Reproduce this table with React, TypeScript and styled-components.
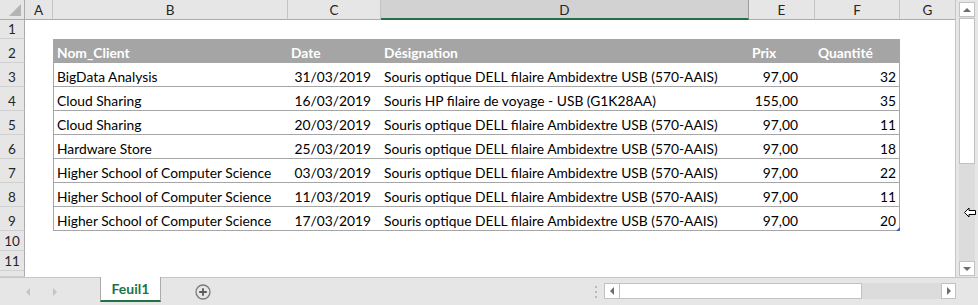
import React from "react";
import styled, { createGlobalStyle } from "styled-components";

const Global = createGlobalStyle`
  html, body { margin: 0; padding: 0; background: #ffffff; overflow: hidden; }
  body { width: 978px; height: 305px; font-family: Lato, "Open Sans", sans-serif; }
  * { box-sizing: border-box; }
`;

const FONT = `Lato, "Open Sans", sans-serif`;
const COLS = [28, 235, 93, 368, 66, 85, 56];
const GRID = `25px ${COLS.map((c) => c + "px").join(" ")}`;
const LETTERS = ["A", "B", "C", "D", "E", "F", "G"];

type Row = [string, string, string, string, string];
const DELL = "Souris optique DELL filaire Ambidextre USB (570-AAIS)";
const ROWS: Row[] = [
  ["BigData Analysis", "31/03/2019", DELL, "97,00", "32"],
  ["Cloud Sharing", "16/03/2019", "Souris HP filaire de voyage - USB (G1K28AA)", "155,00", "35"],
  ["Cloud Sharing", "20/03/2019", DELL, "97,00", "11"],
  ["Hardware Store", "25/03/2019", DELL, "97,00", "18"],
  ["Higher School of Computer Science", "03/03/2019", DELL, "97,00", "22"],
  ["Higher School of Computer Science", "11/03/2019", DELL, "97,00", "11"],
  ["Higher School of Computer Science", "17/03/2019", DELL, "97,00", "20"],
];
const HEAD = ["Nom_Client", "Date", "Désignation", "Prix", "Quantité"];
const ALIGN: ("left" | "right")[] = ["left", "right", "left", "right", "right"];
const PAD_R = [4, 10, 4, 17, 3];

const Window = styled.div`
  width: 978px;
  height: 305px;
  display: flex;
  flex-direction: column;
  font-family: ${FONT};
  background: #e6e6e6;
`;

const Main = styled.div`
  display: flex;
  height: 277px;
`;

const Sheet = styled.div`
  width: 956px;
  height: 277px;
  background: #ffffff;
  border-right: 1px solid #c6c6c6;
  display: flex;
  flex-direction: column;
  overflow: hidden;
`;

const SheetRow = styled.div<{ $h: number }>`
  display: grid;
  grid-template-columns: ${GRID};
  height: ${(p) => p.$h}px;
  flex: none;
`;

const Corner = styled.div`
  position: relative;
  background: #e6e6e6;
  border-right: 1px solid #ababab;
  border-bottom: 1px solid #ababab;
  &::after {
    content: "";
    position: absolute;
    right: 3px;
    bottom: 3px;
    width: 0;
    height: 0;
    border-left: 12px solid transparent;
    border-bottom: 12px solid #b4b4b4;
  }
`;

const ColHead = styled.div<{ $sel?: boolean }>`
  background: ${(p) => (p.$sel ? "#d2d2d2" : "#e6e6e6")};
  border-right: 1px solid ${(p) => (p.$sel ? "#9e9e9e" : "#c3c3c3")};
  border-bottom: ${(p) => (p.$sel ? "2px solid #217346" : "1px solid #ababab")};
  display: flex;
  align-items: center;
  justify-content: center;
  font-size: 13.5px;
  color: #262626;
  padding-top: ${(p) => (p.$sel ? 1 : 0)}px;
`;

const RowHead = styled.div`
  background: #e6e6e6;
  border-right: 1px solid #ababab;
  border-bottom: 1px solid #d0d0d0;
  display: flex;
  align-items: flex-end;
  justify-content: center;
  font-size: 13.5px;
  line-height: 16px;
  color: #262626;
  padding-bottom: 1px;
`;

const Empty = styled.div``;

const TCell = styled.div<{
  $head?: boolean;
  $align: "left" | "right";
  $pr: number;
  $first?: boolean;
  $last?: boolean;
}>`
  position: relative;
  display: flex;
  align-items: flex-end;
  justify-content: ${(p) => (p.$align === "right" ? "flex-end" : "flex-start")};
  padding: 0 ${(p) => p.$pr}px 0 3px;
  background: ${(p) => (p.$head ? "#a5a5a5" : "#ffffff")};
  color: ${(p) => (p.$head ? "#ffffff" : "#000000")};
  font-weight: ${(p) => (p.$head ? 700 : 400)};
  font-size: 13.8px;
  line-height: 18px;
  white-space: nowrap;
  border-bottom: 1px solid ${(p) => (p.$head ? "#a5a5a5" : "#a6a6a6")};
  border-left: ${(p) => (p.$first ? "1px solid #a6a6a6" : "none")};
  border-right: ${(p) => (p.$last ? "1px solid #a6a6a6" : "none")};
`;

const Handle = styled.span`
  position: absolute;
  right: -1px;
  bottom: -1px;
  width: 4px;
  height: 4px;
  background: #3b5dbd;
  clip-path: polygon(100% 0, 100% 100%, 0 100%);
`;

const VBar = styled.div`
  width: 22px;
  height: 277px;
  background: #e6e6e6;
  padding: 2px 3px 1px 3px;
  display: flex;
  flex-direction: column;
`;

const VTrack = styled.div`
  flex: 1;
  background: #dcdcdc;
  display: flex;
  flex-direction: column;
  position: relative;
`;

const ArrowBox = styled.div<{ $w: number; $h: number }>`
  width: ${(p) => p.$w}px;
  height: ${(p) => p.$h}px;
  flex: none;
  background: #ffffff;
  border: 1px solid #c2c2c2;
  display: flex;
  align-items: center;
  justify-content: center;
`;

const VThumb = styled.div`
  height: 146px;
  flex: none;
  margin-top: 1px;
  background: #ffffff;
  border: 1px solid #c2c2c2;
`;

const Spacer = styled.div`
  flex: 1;
`;

const Cursor = styled.svg`
  position: absolute;
  left: 5px;
  top: 190px;
`;

const Bottom = styled.div`
  height: 28px;
  display: flex;
  align-items: flex-start;
  background: #e6e6e6;
  border-top: 1px solid #c6c6c6;
`;

const Nav = styled.div`
  width: 100px;
  height: 27px;
  display: flex;
  align-items: center;
  padding-left: 26px;
  gap: 23px;
`;

const Tab = styled.div`
  width: 61px;
  height: 25px;
  margin-top: -1px;
  background: #ffffff;
  border-left: 1px solid #ababab;
  border-right: 1px solid #ababab;
  border-bottom: 2px solid #217346;
  display: flex;
  align-items: center;
  justify-content: center;
  font-weight: 700;
  font-size: 14px;
  color: #217346;
  padding-bottom: 1px;
`;

const AddBtn = styled.div`
  margin-left: 34px;
  height: 27px;
  display: flex;
  align-items: center;
`;

const Dots = styled.div`
  width: 16px;
  height: 27px;
  display: flex;
  flex-direction: column;
  align-items: center;
  justify-content: center;
  gap: 3px;
  & > span {
    width: 2px;
    height: 2px;
    background: #b9b9b9;
  }
`;

const HBar = styled.div`
  width: 352px;
  height: 16px;
  margin-top: 5px;
  margin-right: 22px;
  display: flex;
`;

const HThumb = styled.div`
  width: 242px;
  background: #ffffff;
  border: 1px solid #c2c2c2;
  border-left: none;
`;

const HTrack = styled.div`
  flex: 1;
  background: #dcdcdc;
`;

const Tri = ({ dir, color = "#6d6d6d", size = 4 }: { dir: "up" | "down" | "left" | "right"; color?: string; size?: number }) => {
  const s = size;
  const pts =
    dir === "up"
      ? `0,${s} ${s},0 ${2 * s},${s}`
      : dir === "down"
      ? `0,0 ${2 * s},0 ${s},${s}`
      : dir === "left"
      ? `${s},0 ${s},${2 * s} 0,${s}`
      : `0,0 0,${2 * s} ${s},${s}`;
  const w = dir === "up" || dir === "down" ? 2 * s : s;
  const h = dir === "up" || dir === "down" ? s : 2 * s;
  return (
    <svg width={w} height={h} viewBox={`0 0 ${w} ${h}`}>
      <polygon points={pts} fill={color} />
    </svg>
  );
};

const ROW_H = [19, 24, 24, 24, 24, 24, 24, 24, 24, 20, 20, 6];

export default function App() {
  return (
    <>
      <Global />
      <Window>
        <Main>
          <Sheet>
            <SheetRow $h={20}>
              <Corner />
              {LETTERS.map((l) => (
                <ColHead key={l} $sel={l === "D"}>
                  {l}
                </ColHead>
              ))}
            </SheetRow>
            {ROW_H.map((h, i) => {
              const rn = i + 1;
              const isHead = rn === 2;
              const data = rn >= 3 && rn <= 9 ? ROWS[rn - 3] : null;
              return (
                <SheetRow key={rn} $h={h}>
                  <RowHead>{rn <= 11 ? rn : ""}</RowHead>
                  <Empty />
                  {isHead || data
                    ? HEAD.map((hd, c) => (
                        <TCell
                          key={c}
                          $head={isHead}
                          $align={isHead ? "left" : ALIGN[c]}
                          $pr={isHead ? 3 : PAD_R[c]}
                          $first={c === 0}
                          $last={c === 4}
                        >
                          {isHead ? hd : data![c]}
                          {rn === 9 && c === 4 ? <Handle /> : null}
                        </TCell>
                      ))
                    : HEAD.map((_, c) => <Empty key={c} />)}
                  <Empty />
                </SheetRow>
              );
            })}
          </Sheet>
          <VBar>
            <ArrowBox $w={16} $h={15}>
              <Tri dir="up" />
            </ArrowBox>
            <VTrack>
              <VThumb />
              <Spacer />
              <Cursor width="12" height="11" viewBox="0 0 12 11">
                <path d="M0.5 5.5 L5 1 L5 3.5 L11.5 3.5 L11.5 7.5 L5 7.5 L5 10 Z" fill="#ffffff" stroke="#000000" strokeWidth="1" />
              </Cursor>
            </VTrack>
            <ArrowBox $w={16} $h={15}>
              <Tri dir="down" />
            </ArrowBox>
          </VBar>
        </Main>
        <Bottom>
          <Nav>
            <Tri dir="left" color="#c4c4c4" />
            <Tri dir="right" color="#c4c4c4" />
          </Nav>
          <Tab>Feuil1</Tab>
          <AddBtn>
            <svg width="16" height="16" viewBox="0 0 16 16">
              <circle cx="8" cy="8" r="7" fill="none" stroke="#7a7a7a" strokeWidth="1.3" />
              <path d="M8 4.2 V11.8 M4.2 8 H11.8" stroke="#5a5a5a" strokeWidth="1.8" />
            </svg>
          </AddBtn>
          <Spacer />
          <Dots>
            <span />
            <span />
            <span />
          </Dots>
          <HBar>
            <ArrowBox $w={16} $h={16}>
              <Tri dir="left" />
            </ArrowBox>
            <HThumb />
            <HTrack />
            <ArrowBox $w={15} $h={16}>
              <Tri dir="right" />
            </ArrowBox>
          </HBar>
        </Bottom>
      </Window>
    </>
  );
}
